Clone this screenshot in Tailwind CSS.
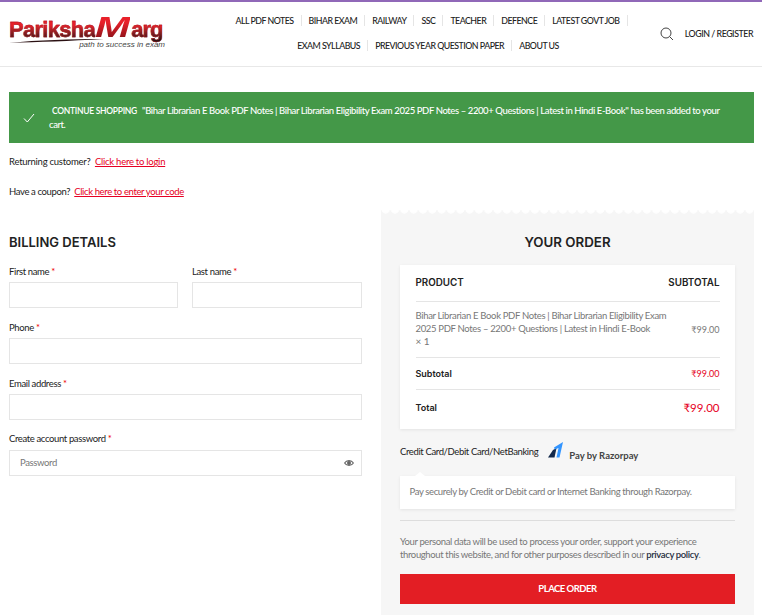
<!DOCTYPE html>
<html lang="en">
<head>
    <meta charset="UTF-8">
    <meta name="viewport" content="width=device-width, initial-scale=1.0">
    <title>Checkout - Pariksha Marg</title>
    <script src="https://cdn.jsdelivr.net/npm/@tailwindcss/browser@4"></script>
</head>

<body class="bg-white font-['Lato','Noto_Sans',sans-serif] text-[#222] text-[9.5px] tracking-[-0.37px] overflow-hidden h-[615px]">

    <!-- header -->
    <header class="h-[67px] border-t-2 border-t-[#9068b8] border-b border-b-[#e8e8e8] flex items-center pl-[9px] pr-[9px]">
        <a href="#" class="relative w-[157px] shrink-0 flex flex-col tracking-normal -mt-[4px]">
            <span class="flex items-baseline h-[28px] font-['Liberation_Sans',sans-serif] font-bold leading-[26px]">
                <span class="h-[28px] text-[22px] tracking-[-0.7px] [-webkit-text-stroke:0.4px_#a8141b] text-transparent bg-clip-text bg-linear-to-b from-[#e8202a] from-30% to-[#2a1012] to-85%">Pariksha</span>
                <span class="inline-block h-[28px] w-[25px] mr-[11px] origin-left scale-x-[1.4] text-[30px] leading-[26px] italic text-transparent bg-clip-text bg-linear-to-b from-[#e8202a] from-30% to-[#7a1016]">M</span>
                <span class="h-[28px] text-[22px] tracking-[-1px] [-webkit-text-stroke:0.4px_#a8141b] text-transparent bg-clip-text bg-linear-to-b from-[#e8202a] from-30% to-[#2a1012] to-85%">arg</span>
            </span>
            <svg width="95" height="4" viewBox="0 0 95 4" class="absolute left-0 top-[25px]">
                <path d="M0 4 C30 1 60 0 95 0 C60 2 30 3 0 4 Z" fill="#2a1012"/>
            </svg>
            <span class="-mt-[2px] text-[8px] italic leading-[10px] text-[#444] text-right pr-[1px] font-['Liberation_Sans',sans-serif]">path to success in exam</span>
        </a>
        <nav class="w-[460px] ml-[32px] shrink-0 flex flex-col items-center text-[8.8px] tracking-[-0.5px] font-medium text-[#222] uppercase -mt-[2px]">
            <ul class="flex items-center h-[25px]">
                <li class="px-[7px] border-r border-[#e5e5e5] leading-[11px]">All PDF Notes</li>
                <li class="px-[7px] border-r border-[#e5e5e5] leading-[11px]">Bihar Exam</li>
                <li class="px-[7px] border-r border-[#e5e5e5] leading-[11px]">Railway</li>
                <li class="px-[7px] border-r border-[#e5e5e5] leading-[11px]">SSC</li>
                <li class="px-[7px] border-r border-[#e5e5e5] leading-[11px]">Teacher</li>
                <li class="px-[7px] border-r border-[#e5e5e5] leading-[11px]">Defence</li>
                <li class="px-[7px] border-r border-[#e5e5e5] leading-[11px]">Latest Govt Job</li>
            </ul>
            <ul class="flex items-center h-[25px]">
                <li class="px-[7px] border-r border-[#e5e5e5] leading-[11px]">Exam Syllabus</li>
                <li class="px-[7px] border-r border-[#e5e5e5] leading-[11px]">Previous Year Question Paper</li>
                <li class="px-[7px] leading-[11px]">About Us</li>
            </ul>
        </nav>
        <div class="flex-1 flex items-center justify-end">
            <svg width="14" height="14" viewBox="0 0 14 14" fill="none" stroke="#444" stroke-width="1" class="mr-[11px] -mt-[1px]">
                <circle cx="6" cy="6" r="5"/>
                <path d="M9.7 9.7 L13 13"/>
            </svg>
            <span class="text-[8.8px] tracking-[-0.45px] font-medium uppercase text-[#222] whitespace-nowrap">Login / Register</span>
        </div>
    </header>

    <main class="pr-[8px] pl-[9px]">
        <!-- notice -->
        <div class="mt-[25px] h-[51px] bg-[#449848] text-white flex items-center pl-[14px] pr-[30px]">
            <svg width="12" height="10" viewBox="0 0 12 10" fill="none" stroke="#fff" stroke-width="1" class="shrink-0 mr-[14px]">
                <path d="M1 5.5 L4.3 9 L11 1"/>
            </svg>
            <p class="leading-[14px] font-medium tracking-[-0.4px]">
                <span class="uppercase font-semibold text-[8.5px] tracking-[-0.28px] ml-[3px] mr-[3px]">Continue Shopping</span>
                "Bihar Librarian E Book PDF Notes | Bihar Librarian Eligibility Exam 2025 PDF Notes – 2200+ Questions | Latest in Hindi E-Book" has been added to your cart.
            </p>
        </div>

        <p class="mt-[12px] leading-[14px] tracking-[-0.25px]">Returning customer? &nbsp;<a href="#" class="text-[#e60023] underline">Click here to login</a></p>
        <p class="mt-[16px] leading-[14px]">Have a coupon? &nbsp;<a href="#" class="text-[#e60023] underline">Click here to enter your code</a></p>

        <div class="mt-[11px] flex items-start gap-[19px]">
            <!-- billing -->
            <form class="w-[353px] shrink-0 pt-[24px]">
                <h3 class="font-['Inter',sans-serif] font-semibold text-[13px] tracking-normal leading-[16px] text-[#222] uppercase">Billing details</h3>
                <div class="mt-[15px] grid grid-cols-[169px_170px] gap-x-[14px]">
                    <div>
                        <label class="block leading-[13px] mb-[4px]">First name <span class="text-[#e00]">*</span></label>
                        <input class="block w-full h-[26px] border border-[#e5e5e5] bg-white">
                    </div>
                    <div>
                        <label class="block leading-[13px] mb-[4px]">Last name <span class="text-[#e00]">*</span></label>
                        <input class="block w-full h-[26px] border border-[#e5e5e5] bg-white">
                    </div>
                </div>
                <label class="block leading-[13px] mt-[13px] mb-[4px]">Phone <span class="text-[#e00]">*</span></label>
                <input class="block w-full h-[26px] border border-[#e5e5e5] bg-white">
                <label class="block leading-[13px] mt-[13px] mb-[4px]">Email address <span class="text-[#e00]">*</span></label>
                <input class="block w-full h-[26px] border border-[#e5e5e5] bg-white">
                <label class="block leading-[13px] mt-[12px] mb-[5px]">Create account password <span class="text-[#e00]">*</span></label>
                <div class="relative">
                    <input placeholder="Password" class="block w-full h-[26px] border border-[#e5e5e5] bg-white pl-[10px] pb-[1px] placeholder:text-[#777]">
                    <svg width="10" height="8" viewBox="0 0 10 8" class="absolute right-[8px] top-[9px]" fill="none" stroke="#666" stroke-width="1.1">
                        <path d="M0.6 4 C2.5 0.8 7.5 0.8 9.4 4 C7.5 7.2 2.5 7.2 0.6 4 Z"/>
                        <circle cx="5" cy="4" r="1.4" fill="#666"/>
                    </svg>
                </div>
            </form>

            <!-- order -->
            <section class="relative w-[373px] shrink-0 h-[420px] bg-[#f6f6f6] px-[19px] pt-[24px]">
                <div class="absolute left-0 right-0 -top-[1px] h-[5px] bg-[radial-gradient(circle_at_center,#fff_4px,transparent_4.6px)] bg-[length:9.33px_9.33px] bg-[position:0_-4.6px]"></div>
                <h3 class="font-['Inter',sans-serif] font-semibold text-[13.3px] tracking-normal leading-[16px] text-[#222] uppercase text-center">Your order</h3>
                <div class="mt-[15px] h-[164px] bg-white shadow-[0_1px_3px_rgba(0,0,0,0.08)] px-[15.5px] flex flex-col">
                    <div class="h-[37px] pt-[1px] border-b border-[#e5e5e5] flex justify-between items-center font-['Inter',sans-serif] font-semibold text-[9.8px] tracking-normal text-[#222] uppercase">
                        <span>Product</span><span>Subtotal</span>
                    </div>
                    <div class="h-[56px] border-b border-[#e5e5e5] flex justify-between items-center text-[#777]">
                        <div class="w-[260px] leading-[12.5px] tracking-[-0.33px]">Bihar Librarian E Book PDF Notes | Bihar Librarian Eligibility Exam 2025 PDF Notes – 2200+ Questions | Latest in Hindi E-Book<br><span class="text-[10px] tracking-normal">× 1</span></div>
                        <span class="text-[9px] tracking-normal">₹99.00</span>
                    </div>
                    <div class="h-[32px] border-b border-[#e5e5e5] flex justify-between items-center">
                        <span class="font-['Inter',sans-serif] font-semibold text-[9px] tracking-normal text-[#222]">Subtotal</span>
                        <span class="text-[#e60023] text-[9px] tracking-normal">₹99.00</span>
                    </div>
                    <div class="flex-1 flex justify-between items-center pb-[3px]">
                        <span class="font-['Inter',sans-serif] font-semibold text-[9px] tracking-normal text-[#222]">Total</span>
                        <span class="text-[#e60023] text-[11.5px] tracking-normal">₹99.00</span>
                    </div>
                </div>

                <div class="mt-[14px] h-[22px] flex items-start">
                    <span class="text-[#222] leading-[17px]">Credit Card/Debit Card/NetBanking</span>
                    <svg width="16" height="16" viewBox="0 0 16 16" class="ml-[10px] -mt-[1px]">
                        <path d="M0 15.5 L5 8 L8.5 6 L6.5 15.5 Z" fill="#13294b"/>
                        <path d="M6 5.5 L15 0 L11.5 15.5 L8.5 15.5 L10.5 6 L6.8 7.5 Z" fill="#3395ff"/>
                    </svg>
                    <span class="ml-[5px] mt-[7px] text-[#444] font-bold text-[9.5px] tracking-normal leading-[12px]">Pay by Razorpay</span>
                </div>
                <div class="relative mt-[11px] h-[33px] bg-white shadow-[0_1px_3px_rgba(0,0,0,0.08)] pl-[9.5px] flex items-center text-[#777]">
                    <div class="absolute left-[15px] -top-[4px] w-0 h-0 border-x-[5px] border-x-transparent border-b-[4px] border-b-white"></div>
                    Pay securely by Credit or Debit card or Internet Banking through Razorpay.
                </div>
                <div class="mt-[11px] border-t border-[#ddd]"></div>
                <p class="mt-[14px] leading-[13px] text-[#777]">Your personal data will be used to process your order, support your experience throughout this website, and for other purposes described in our <a href="#" class="text-[#1f2d3d] font-semibold">privacy policy</a>.</p>
                <button class="mt-[13px] block w-full h-[30px] bg-[#e31e24] text-white font-bold text-[9.5px] tracking-[-0.5px] uppercase text-center">Place order</button>
            </section>
        </div>
    </main>

</body>
</html>
